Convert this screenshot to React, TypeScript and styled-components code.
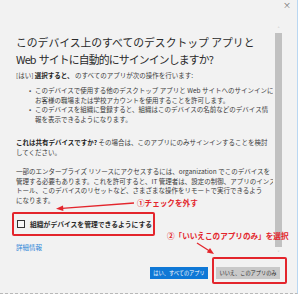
import { createGlobalStyle, styled } from "styled-components";

const GlobalStyle = createGlobalStyle`
  html, body {
    margin: 0;
    padding: 0;
    background: #ffffff;
  }
  body {
    font-family: "Noto Sans CJK JP", "Noto Sans", sans-serif;
  }
`

const Page = styled.div`
  position: relative;
  width: 300px;
  height: 296px;
  overflow: hidden;
`

const Dialog = styled.div`
  width: 297px;
  height: 293px;
  background: #f2f2f2;
  border-right: 1px solid #b9d7f2;
  border-bottom: 1px dashed #b8b8b8;
  display: flex;
  flex-direction: column;
  color: #3a3a3a;
`

const TopBar = styled.div`
  height: 25px;
  display: flex;
  justify-content: flex-end;
  align-items: flex-start;
  padding-right: 6px;
  box-sizing: border-box;
`

const Close = styled.span`
  font-size: 8px;
  line-height: 10px;
  color: #6b6b6b;
`

const Main = styled.div`
  height: 232px;
  display: flex;
`

const Content = styled.div`
  width: 273px;
  overflow: hidden;
  padding: 8.5px 0 0 16px;
  box-sizing: border-box;
  white-space: nowrap;
`

const Title = styled.h1`
  margin: 0;
  font-size: 10.8px;
  line-height: 17px;
  font-weight: 400;
  color: #2a2a2a;
`

const TitleLine = styled.span<{ $tight?: boolean }>`
  display: block;
  letter-spacing: ${(p) => (p.$tight ? "-0.8px" : "0")};
  word-spacing: ${(p) => (p.$tight ? "1.5px" : "0")};
`

const Text = styled.p<{ $gap: number }>`
  margin: ${(p) => p.$gap}px 0 0;
  font-size: 6.5px;
  line-height: 9.4px;
`

const Strong = styled.b`
  font-weight: 700;
  color: #222;
`

const List = styled.ul`
  margin: 5.6px 0 0;
  padding: 0 0 0 19px;
  font-size: 6.5px;
  line-height: 9.4px;
  list-style: none;
`

const Item = styled.li`
  position: relative;
  &::before {
    content: "•";
    position: absolute;
    left: -6px;
    color: #555;
  }
`

const CheckRow = styled.label`
  margin: 7.1px 0 0 -4px;
  width: 143px;
  height: 24px;
  box-sizing: border-box;
  border: 2px solid #e3252c;
  border-radius: 2px;
  display: flex;
  align-items: center;
  gap: 5px;
  padding-left: 3px;
  font-size: 6.8px;
  font-weight: 700;
  color: #2a2a2a;
`

const Box = styled.span`
  width: 8px;
  height: 8px;
  box-sizing: border-box;
  border: 1.2px solid #333;
  background: #f7f7f7;
`

const Link = styled.a`
  display: block;
  margin-top: 7.3px;
  font-size: 6.5px;
  line-height: 9.4px;
  color: #2f86d8;
`

const ScrollBar = styled.div`
  margin-left: 2px;
  width: 7px;
  display: flex;
  flex-direction: column;
  align-items: center;
`

const Arrow = styled.span`
  height: 8px;
  font-size: 6px;
  line-height: 8px;
  color: #a8a8a8;
`

const Thumb = styled.div`
  flex: 1;
  width: 7px;
  background: #c1c1c1;
  margin: 0 0 2px;
`

const Footer = styled.div`
  flex: 1;
  display: flex;
  justify-content: flex-end;
  align-items: flex-start;
  padding-right: 10px;
`

const Button = styled.button<{ $primary?: boolean }>`
  display: block;
  height: 12px;
  padding: 0;
  border: 0;
  font-family: inherit;
  font-size: 5.2px;
  line-height: 12px;
  background: ${(p) => (p.$primary ? "#0f78d6" : "#c9c9c9")};
  color: ${(p) => (p.$primary ? "#ffffff" : "#2a2a2a")};
  width: ${(p) => (p.$primary ? "58px" : "64px")};
  margin-top: ${(p) => (p.$primary ? "10px" : "0")};
`

const Highlight = styled.div`
  display: flex;
  align-items: flex-start;
  margin-left: 4px;
  width: 75px;
  height: 27px;
  box-sizing: border-box;
  border: 2px solid #e3252c;
  border-radius: 2px;
  padding: 8px 5px 3px 2px;
`

const Overlay = styled.svg`
  position: absolute;
  left: 0;
  top: 0;
  pointer-events: none;
`

const Note = styled.span<{ $x: number; $y: number }>`
  position: absolute;
  left: ${(p) => p.$x}px;
  top: ${(p) => p.$y}px;
  font-size: 7.6px;
  line-height: 10px;
  font-weight: 700;
  color: #e3252c;
  white-space: nowrap;
`

export default function App() {
  return (
    <>
      <GlobalStyle />
      <Page>
        <Dialog>
          <TopBar>
            <Close>×</Close>
          </TopBar>
          <Main>
            <Content>
              <Title>
                <TitleLine>このデバイス上のすべてのデスクトップ アプリと</TitleLine>
                <TitleLine $tight>Web サイトに自動的にサインインしますか?</TitleLine>
              </Title>
              <Text $gap={3.8}>
                [はい] <Strong>選択すると、</Strong> のすべてのアプリが次の操作を行います:
              </Text>
              <List>
                <Item>
                  このデバイスで使用する他のデスクトップ アプリと Web サイトへのサインインに
                  <br />
                  お客様の職場または学校アカウントを使用することを許可します。
                </Item>
                <Item>
                  このデバイスを組織に登録すると、組織はこのデバイスの名前などのデバイス情
                  <br />
                  報を表示できるようになります。
                </Item>
              </List>
              <Text $gap={14.4}>
                <Strong>これは共有デバイスですか?</Strong> その場合は、このアプリにのみサインインすることを検討
                <br />
                してください。
              </Text>
              <Text $gap={10.2}>
                一部のエンタープライズ リソースにアクセスするには、organization でこのデバイスを
                <br />
                管理する必要もあります。これを許可すると、IT 管理者は、設定の制御、アプリのインス
                <br />
                トール、このデバイスのリセットなど、さまざまな操作をリモートで実行できるよう
                <br />
                になります。
              </Text>
              <CheckRow>
                <Box />
                組織がデバイスを管理できるようにする
              </CheckRow>
              <Link>詳細情報</Link>
            </Content>
            <ScrollBar>
              <Arrow>˄</Arrow>
              <Thumb />
              <Arrow>˅</Arrow>
            </ScrollBar>
          </Main>
          <Footer>
            <Button $primary>はい、すべてのアプリ</Button>
            <Highlight>
              <Button>いいえ、このアプリのみ</Button>
            </Highlight>
          </Footer>
        </Dialog>
        <Overlay width="300" height="296" viewBox="0 0 300 296">
          <line x1="134" y1="203" x2="62" y2="208.4" stroke="#e3252c" strokeWidth="1.3" />
          <polygon points="56,208.8 63,205.6 63.4,211" fill="#e3252c" />
          <line x1="197" y1="243" x2="209.5" y2="251" stroke="#e3252c" strokeWidth="1.3" />
          <polygon points="214,254 206.8,252.6 210,248" fill="#e3252c" />
        </Overlay>
        <Note $x={137} $y={198}>①チェックを外す</Note>
        <Note $x={167} $y={231}>②「いいえこのアプリのみ」を選択</Note>
      </Page>
    </>
  );
}
